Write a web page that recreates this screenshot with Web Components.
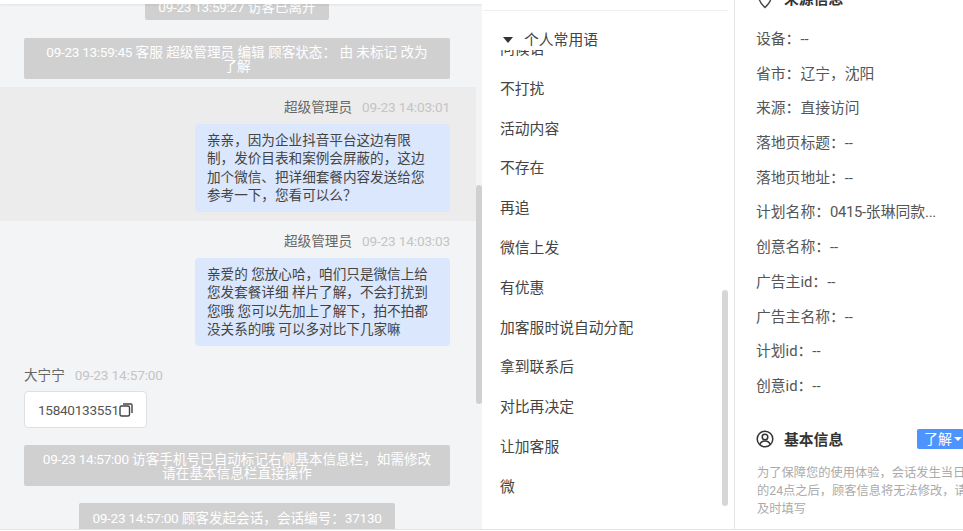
<!DOCTYPE html>
<html lang="zh">
<head>
<meta charset="utf-8">
<style>
    html, body { margin: 0; height: 100%; background: #fff; overflow: hidden; }
    body { font: 14.8px Roboto, "Noto Sans CJK SC", sans-serif; color: #444; }
</style>
</head>
<body>
<kefu-page>
    <chat-panel slot="chat">
        <sys-msg narrow first><t-num>09-23 13:59:27</t-num> 访客已离开</sys-msg>
        <sys-msg><t-num>09-23 13:59:45</t-num> 客服 超级管理员 编辑 顾客状态： 由 未标记 改为 了解</sys-msg>
        <chat-msg side="right" active name="超级管理员" time="09-23 14:03:01">亲亲，因为企业抖音平台这边有限制，发价目表和案例会屏蔽的，这边加个微信、把详细套餐内容发送给您参考一下，您看可以么？</chat-msg>
        <chat-msg side="right" name="超级管理员" time="09-23 14:03:03">亲爱的 您放心哈，咱们只是微信上给您发套餐详细 样片了解，不会打扰到您哦 您可以先加上了解下，拍不拍都没关系的哦 可以多对比下几家嘛</chat-msg>
        <chat-msg name="大宁宁" time="09-23 14:57:00" phone><t-num>15840133551</t-num></chat-msg>
        <sys-msg><t-num>09-23 14:57:00</t-num> 访客手机号已自动标记右侧基本信息栏，如需修改请在基本信息栏直接操作</sys-msg>
        <sys-msg narrow><t-num>09-23 14:57:00</t-num> 顾客发起会话，会话编号：<t-num>37130</t-num></sys-msg>
    </chat-panel>
    <phrase-panel slot="phrases" title="个人常用语">
        <phrase-item first>问候语</phrase-item>
        <phrase-item>不打扰</phrase-item>
        <phrase-item>活动内容</phrase-item>
        <phrase-item>不存在</phrase-item>
        <phrase-item>再追</phrase-item>
        <phrase-item>微信上发</phrase-item>
        <phrase-item>有优惠</phrase-item>
        <phrase-item>加客服时说自动分配</phrase-item>
        <phrase-item>拿到联系后</phrase-item>
        <phrase-item>对比再决定</phrase-item>
        <phrase-item>让加客服</phrase-item>
        <phrase-item>微</phrase-item>
    </phrase-panel>
    <info-panel slot="info">
        <info-row>设备：--</info-row>
        <info-row>省市：辽宁，沈阳</info-row>
        <info-row>来源：直接访问</info-row>
        <info-row>落地页标题：--</info-row>
        <info-row>落地页地址：--</info-row>
        <info-row>计划名称：<t-num>0415-</t-num>张琳同款<t-num>...</t-num></info-row>
        <info-row>创意名称：--</info-row>
        <info-row>广告主id：--</info-row>
        <info-row>广告主名称：--</info-row>
        <info-row>计划id：--</info-row>
        <info-row>创意id：--</info-row>
    </info-panel>
</kefu-page>

<script>
function makeEl(name, html) {
    customElements.define(name, class extends HTMLElement {
        constructor() {
            super();
            this.attachShadow({ mode: 'open' }).innerHTML = typeof html === 'function' ? html(this) : html;
        }
    });
}

// no whitespace here: it would show up as a space round the digits
makeEl('t-num', `<style>:host { letter-spacing: -.3px; }</style><slot></slot>`);

makeEl('kefu-page', `
    <style>
        :host { display: grid; grid-template-columns: 482px 253px 1fr; height: 529px; border-bottom: 1px solid #e4e4e4; overflow: hidden; }
    </style>
    <slot name="chat"></slot>
    <slot name="phrases"></slot>
    <slot name="info"></slot>
`);

makeEl('chat-panel', `
    <style>
        :host { display: block; position: relative; height: 529px; overflow: hidden; background: #f3f4f6; font-size: 13.6px; }
        .top { position: absolute; left: 0; right: 0; top: 0; height: 4px; background: #fff; box-shadow: 0 1px 3px rgba(0,0,0,.08); z-index: 2; }
        .bar { position: absolute; right: 0; top: 185px; width: 6px; height: 219px; background: #d0d0d0; border-radius: 3px; }
    </style>
    <div class="top"></div>
    <slot></slot>
    <div class="bar"></div>
`);

makeEl('sys-msg', el => {
    const narrow = el.hasAttribute('narrow');
    return `
    <style>
        :host { display: flex; justify-content: center; margin: ${el.hasAttribute('first') ? '-8px' : '0'} 32px ${narrow ? 18 : 17}px 24px; text-align: center; }
        div { box-sizing: border-box; width: ${narrow ? 'auto' : '100%'}; padding: ${narrow ? '8px 13px 6px' : '7px 16px 6px'};
            background: #d0d0d0; color: #fff; line-height: 14px; border-radius: 2px; }
    </style>
    <div><slot></slot></div>`;
});

makeEl('chat-msg', el => {
    const right = el.getAttribute('side') === 'right';
    const copy = `<svg width="14" height="14" viewBox="0 0 14 14" fill="none" stroke="#444" stroke-width="1.4"><rect x="1" y="3" width="9.500" height="10" rx="1.500"/><path d="M4 1h8a1 1 0 0 1 1 1v8"/></svg>`;
    return `
    <style>
        :host { display: block; margin: 0 6px 0 0; padding: 11px 26px 9px 24px; }
        :host([active]) { background: #ececec; padding-bottom: 9.5px; margin-top: -9px; }
        :host([phone]) { padding-bottom: 17px; }
        .head { display: flex; gap: 10px; justify-content: ${right ? 'flex-end' : 'flex-start'}; line-height: 18px; margin-bottom: 7.5px; color: #666; }
        .time { color: #c4c4c4; letter-spacing: -.15px; }
        .wrap { display: flex; justify-content: ${right ? 'flex-end' : 'flex-start'}; }
        .bubble { box-sizing: border-box; width: 255px; padding: 7.600px 14px 7.600px 12px; background: #dbe7fd; border-radius: 4px; line-height: 18.200px; color: #444; }
        .phone { display: flex; align-items: center; box-sizing: border-box; height: 37px; padding: 0 13px; background: #fff; border: 1px solid #e0e0e0; border-radius: 4px; color: #555; }
    </style>
    <div class="head"><span>${el.getAttribute('name')}</span><span class="time">${el.getAttribute('time')}</span></div>
    <div class="wrap">
        ${el.hasAttribute('phone') ? `<div class="phone"><slot></slot>${copy}</div>` : `<div class="bubble"><slot></slot></div>`}
    </div>`;
});

makeEl('phrase-panel', el => `
    <style>
        :host { display: block; position: relative; height: 529px; overflow: hidden; box-sizing: border-box; border-right: 1px solid #e4e4e4; background: #fff; }
        .rule { height: 10px; margin: 0 6px 0 1px; border-bottom: 1px solid #eee; }
        .head { position: absolute; top: 11px; left: 1px; right: 0; height: 39px; background: #fff; display: flex; align-items: flex-end; gap: 11px; padding-left: 20px; line-height: 20px; color: #444; z-index: 1; box-sizing: border-box; }
        .tri { width: 0; height: 0; margin-bottom: 7px; border: 5.500px solid transparent; border-top: 6px solid #333; border-bottom: 0; }
        .list { padding: 28px 0 0 18px; }
        .bar { position: absolute; right: 6px; top: 290px; width: 6px; height: 216px; border-radius: 3px; background: #d6d6d6; }
    </style>
    <div class="rule"></div>
    <div class="head"><span class="tri"></span><span>${el.getAttribute('title')}</span></div>
    <div class="list"><slot></slot></div>
    <div class="bar"></div>
`);

makeEl('phrase-item', `
    <style>
        :host { display: block; height: 39.800px; line-height: 20px; color: #444; }
    </style>
    <slot></slot>
`);

makeEl('info-panel', `
    <style>
        :host { display: block; height: 529px; overflow: hidden; padding-left: 21px; background: #fff; }
        .title { display: flex; align-items: center; gap: 10px; font-weight: 700; color: #333; }
        .top { height: 20px; margin-top: -13px; margin-bottom: 22px; }
        .top svg { margin-top: 5px; }
        .rows { margin-bottom: 18px; }
        .base { width: 250px; height: 20px; position: relative; }
        .btn { position: absolute; left: 161px; top: 0; height: 20px; width: 47px; box-sizing: border-box; padding-left: 7px; display: flex; align-items: center; gap: 2px; border-radius: 2px; background: #4d94ff; color: #fff; font-size: 14px; font-weight: 400; line-height: 20px; }
        .btn i { width: 0; height: 0; border: 4px solid transparent; border-top: 4px solid #fff; border-bottom: 0; }
        .note { width: 215px; margin: 15px 0 0 1px; font-size: 12.250px; line-height: 18.400px; color: #aaa; }
    </style>
    <div class="title top">
        <svg width="18" height="18" viewBox="0 0 18 18" fill="none" stroke="#444" stroke-width="1.4"><path d="M9 1C5.500 1 3 3.600 3 6.800c0 4 6 9.700 6 9.700s6-5.700 6-9.700C15 3.600 12.500 1 9 1z"/></svg>
        <span>来源信息</span>
    </div>
    <div class="rows"><slot></slot></div>
    <div class="title base">
        <svg width="18" height="18" viewBox="0 0 18 18" fill="none" stroke="#333" stroke-width="1.500"><circle cx="9" cy="9" r="7.800"/><circle cx="9" cy="7" r="2.800"/><path d="M3.800 14.500c.8-2.400 2.700-3.600 5.200-3.600s4.400 1.200 5.200 3.600"/></svg>
        <span>基本信息</span>
        <span class="btn">了解<i></i></span>
    </div>
    <div class="note">为了保障您的使用体验，会话发生当日的24点之后，顾客信息将无法修改，请及时填写</div>
`);

makeEl('info-row', `
    <style>
        :host { display: block; height: 34.700px; line-height: 20px; color: #555; white-space: nowrap; }
    </style>
    <slot></slot>
`);
</script>
</body>
</html>
